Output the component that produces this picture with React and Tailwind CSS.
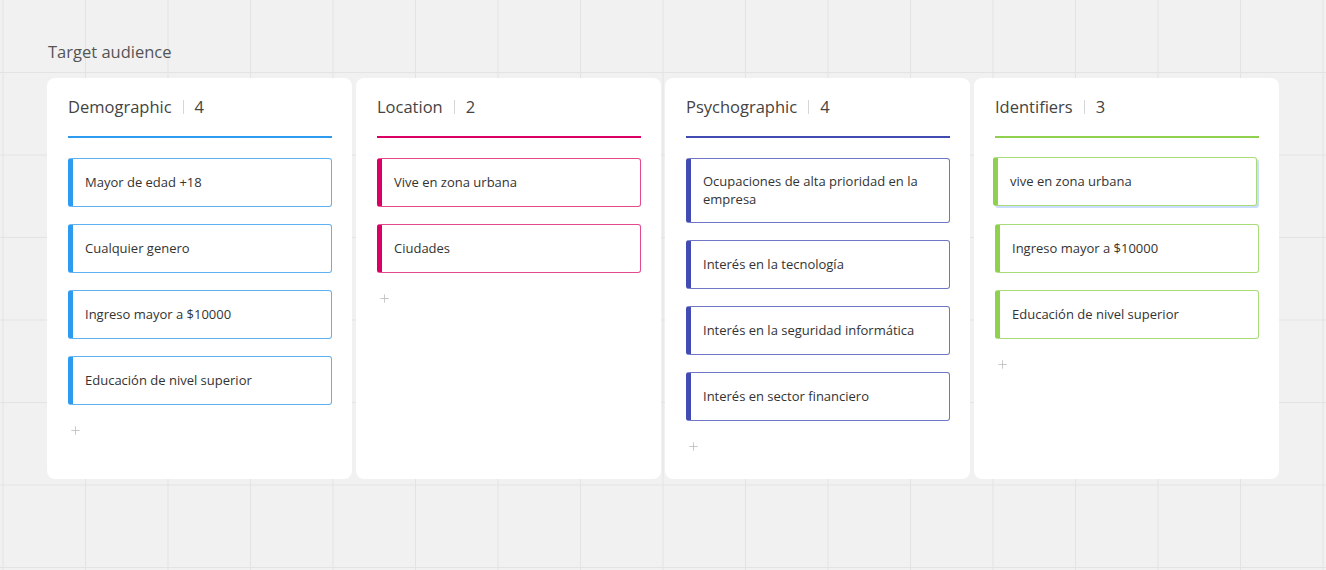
import { Plus } from 'lucide-react';

const columns = [
  {
    title: 'Demographic',
    color: '#2d9bf0',
    soft: '#5fb1f2',
    items: ['Mayor de edad +18', 'Cualquier genero', 'Ingreso mayor a $10000', 'Educación de nivel superior'],
  },
  {
    title: 'Location',
    color: '#da0063',
    soft: '#e2498f',
    items: ['Vive en zona urbana', 'Ciudades'],
  },
  {
    title: 'Psychographic',
    color: '#414bb2',
    soft: '#6f76c6',
    items: [
      'Ocupaciones de alta prioridad en la empresa',
      'Interés en la tecnología',
      'Interés en la seguridad informática',
      'Interés en sector financiero',
    ],
  },
  {
    title: 'Identifiers',
    color: '#8fd14f',
    soft: '#a9dc78',
    items: ['vive en zona urbana', 'Ingreso mayor a $10000', 'Educación de nivel superior'],
    dragged: 0,
  },
];

function Item({ text, col, dragged }) {
  return (
    <div
      className={
        'flex items-center rounded-[3px] border bg-white pl-[12px] pr-3 py-[14px] min-h-[49px] text-[13px] leading-[17.5px] text-[#333] ' +
        (dragged ? '-translate-x-[2px] -translate-y-[1px] shadow-[2px_2px_0_#c9ddff]' : '')
      }
      style={{ borderColor: col.soft, borderLeft: `5px solid ${col.color}` }}
    >
      {text}
    </div>
  );
}

function Column({ col }) {
  return (
    <div className="w-[305px] h-[401px] rounded-[8px] bg-white pl-[21px] pr-[20px] pt-[17px]">
      <div className="flex items-center h-[24px] text-[16.5px] text-[#444]">
        <span>{col.title}</span>
        <span className="mx-[11px] h-[14px] w-px bg-[#d6d6d6]" />
        <span>{col.items.length}</span>
      </div>
      <div className="mt-[17px] h-[2px]" style={{ backgroundColor: col.color }} />
      <div className="mt-[20px] flex flex-col gap-[17px]">
        {col.items.map((t, i) => (
          <Item key={i} text={t} col={col} dragged={col.dragged === i} />
        ))}
      </div>
      <div className="mt-[19px] pl-[1px] text-[#bdbdbd]">
        <Plus size={13} strokeWidth={1.5} />
      </div>
    </div>
  );
}

export default function App() {
  return (
    <div
      className="w-[1326px] h-[570px] overflow-hidden bg-[#f1f1f1] bg-[linear-gradient(to_right,#e3e3e3_1px,transparent_1px),linear-gradient(to_bottom,#e3e3e3_1px,transparent_1px)] bg-[size:82.5px_82.5px] bg-[position:2.5px_-10.5px] pl-[47px] pt-[41px]"
      style={{ fontFamily: '"Open Sans", "Noto Sans", sans-serif' }}
    >
      <div className="pl-px text-[16.5px] leading-[22px] text-[#555]">Target audience</div>
      <div className="mt-[15px] flex gap-[4px]">
        {columns.map((c) => (
          <Column key={c.title} col={c} />
        ))}
      </div>
    </div>
  );
}
